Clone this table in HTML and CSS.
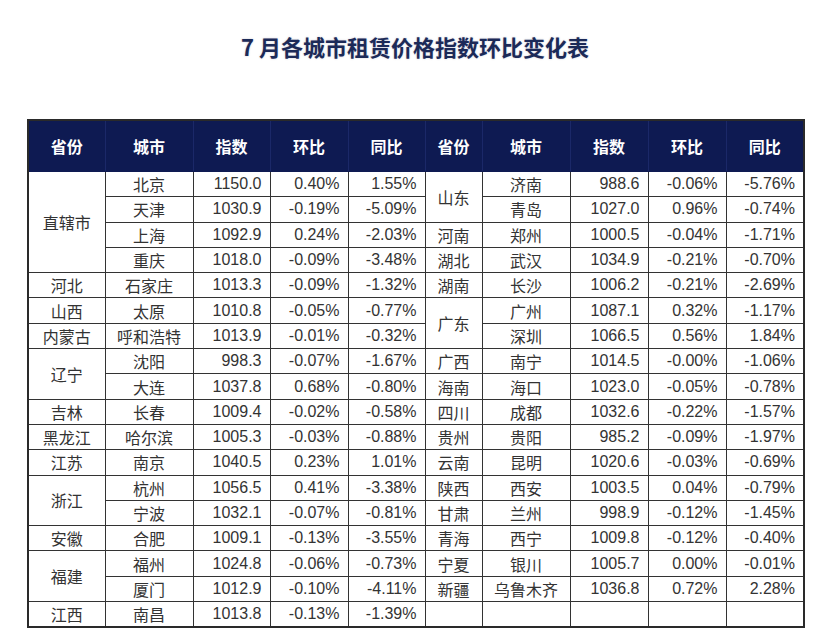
FILE: index.html
```html
<!DOCTYPE html>
<html lang="zh">
<head>
<meta charset="utf-8">
<title>7 月各城市租赁价格指数环比变化表</title>
<link rel="stylesheet" href="styles.css">
</head>
<body>
<div class="page">
  <h1 class="title">7 月各城市租赁价格指数环比变化表</h1>
  <table class="rent">
    <colgroup>
      <col class="c-prov"><col class="c-city"><col class="c-num"><col class="c-num2"><col class="c-num">
      <col class="c-prov2"><col class="c-city"><col class="c-num2"><col class="c-num2"><col class="c-num2">
    </colgroup>
    <thead>
      <tr>
        <th>省份</th><th>城市</th><th>指数</th><th>环比</th><th>同比</th>
        <th>省份</th><th>城市</th><th>指数</th><th>环比</th><th>同比</th>
      </tr>
    </thead>
    <tbody>
      <tr><td class="t" rowspan="4">直辖市</td><td class="t">北京</td><td>1150.0</td><td>0.40%</td><td>1.55%</td>
          <td class="t" rowspan="2">山东</td><td class="t">济南</td><td>988.6</td><td>-0.06%</td><td>-5.76%</td></tr>
      <tr><td class="t">天津</td><td>1030.9</td><td>-0.19%</td><td>-5.09%</td>
          <td class="t">青岛</td><td>1027.0</td><td>0.96%</td><td>-0.74%</td></tr>
      <tr><td class="t">上海</td><td>1092.9</td><td>0.24%</td><td>-2.03%</td>
          <td class="t">河南</td><td class="t">郑州</td><td>1000.5</td><td>-0.04%</td><td>-1.71%</td></tr>
      <tr><td class="t">重庆</td><td>1018.0</td><td>-0.09%</td><td>-3.48%</td>
          <td class="t">湖北</td><td class="t">武汉</td><td>1034.9</td><td>-0.21%</td><td>-0.70%</td></tr>
      <tr><td class="t">河北</td><td class="t">石家庄</td><td>1013.3</td><td>-0.09%</td><td>-1.32%</td>
          <td class="t">湖南</td><td class="t">长沙</td><td>1006.2</td><td>-0.21%</td><td>-2.69%</td></tr>
      <tr><td class="t">山西</td><td class="t">太原</td><td>1010.8</td><td>-0.05%</td><td>-0.77%</td>
          <td class="t" rowspan="2">广东</td><td class="t">广州</td><td>1087.1</td><td>0.32%</td><td>-1.17%</td></tr>
      <tr><td class="t">内蒙古</td><td class="t">呼和浩特</td><td>1013.9</td><td>-0.01%</td><td>-0.32%</td>
          <td class="t">深圳</td><td>1066.5</td><td>0.56%</td><td>1.84%</td></tr>
      <tr><td class="t" rowspan="2">辽宁</td><td class="t">沈阳</td><td>998.3</td><td>-0.07%</td><td>-1.67%</td>
          <td class="t">广西</td><td class="t">南宁</td><td>1014.5</td><td>-0.00%</td><td>-1.06%</td></tr>
      <tr><td class="t">大连</td><td>1037.8</td><td>0.68%</td><td>-0.80%</td>
          <td class="t">海南</td><td class="t">海口</td><td>1023.0</td><td>-0.05%</td><td>-0.78%</td></tr>
      <tr><td class="t">吉林</td><td class="t">长春</td><td>1009.4</td><td>-0.02%</td><td>-0.58%</td>
          <td class="t">四川</td><td class="t">成都</td><td>1032.6</td><td>-0.22%</td><td>-1.57%</td></tr>
      <tr><td class="t">黑龙江</td><td class="t">哈尔滨</td><td>1005.3</td><td>-0.03%</td><td>-0.88%</td>
          <td class="t">贵州</td><td class="t">贵阳</td><td>985.2</td><td>-0.09%</td><td>-1.97%</td></tr>
      <tr><td class="t">江苏</td><td class="t">南京</td><td>1040.5</td><td>0.23%</td><td>1.01%</td>
          <td class="t">云南</td><td class="t">昆明</td><td>1020.6</td><td>-0.03%</td><td>-0.69%</td></tr>
      <tr><td class="t" rowspan="2">浙江</td><td class="t">杭州</td><td>1056.5</td><td>0.41%</td><td>-3.38%</td>
          <td class="t">陕西</td><td class="t">西安</td><td>1003.5</td><td>0.04%</td><td>-0.79%</td></tr>
      <tr><td class="t">宁波</td><td>1032.1</td><td>-0.07%</td><td>-0.81%</td>
          <td class="t">甘肃</td><td class="t">兰州</td><td>998.9</td><td>-0.12%</td><td>-1.45%</td></tr>
      <tr><td class="t">安徽</td><td class="t">合肥</td><td>1009.1</td><td>-0.13%</td><td>-3.55%</td>
          <td class="t">青海</td><td class="t">西宁</td><td>1009.8</td><td>-0.12%</td><td>-0.40%</td></tr>
      <tr><td class="t" rowspan="2">福建</td><td class="t">福州</td><td>1024.8</td><td>-0.06%</td><td>-0.73%</td>
          <td class="t">宁夏</td><td class="t">银川</td><td>1005.7</td><td>0.00%</td><td>-0.01%</td></tr>
      <tr><td class="t">厦门</td><td>1012.9</td><td>-0.10%</td><td>-4.11%</td>
          <td class="t">新疆</td><td class="t">乌鲁木齐</td><td>1036.8</td><td>0.72%</td><td>2.28%</td></tr>
      <tr><td class="t">江西</td><td class="t">南昌</td><td>1013.8</td><td>-0.13%</td><td>-1.39%</td>
          <td></td><td></td><td></td><td></td><td></td></tr>
    </tbody>
  </table>
</div>
</body>
</html>
```
FILE: styles.css
```css
html, body {
  margin: 0;
  padding: 0;
  background: #ffffff;
}

.page {
  width: 830px;
  height: 642px;
  padding-top: 31px;
  box-sizing: border-box;
  font-family: "Liberation Sans", "Noto Sans CJK SC", sans-serif;
}

.title {
  margin: 0;
  height: 30px;
  line-height: 30px;
  text-align: center;
  font-family: "Noto Sans CJK SC", sans-serif;
  font-size: 22px;
  font-weight: 700;
  color: #1c2a58;
  letter-spacing: 0;
  text-shadow: 0 0 2px rgba(28, 42, 88, 0.25);
}

.rent {
  margin: 58px 0 0 27px;
  width: 776px;
  border-collapse: collapse;
  table-layout: fixed;
  border: 2px solid #2a2a2a;
}

.c-prov { width: 77px; }
.c-city { width: 88px; }
.c-num { width: 77px; }
.c-num2 { width: 78px; }
.c-prov2 { width: 57px; }

.rent th {
  height: 50px;
  padding: 0;
  background: #0e1a52;
  color: #ffffff;
  font-family: "Noto Sans CJK SC", sans-serif;
  font-size: 16px;
  font-weight: 700;
  text-align: center;
  border: 1px solid #0e1a52;
  border-right: 1px solid #1b2868;
}

.rent td {
  height: 24.3px;
  padding: 0 8px 0 0;
  border: 1px solid #333333;
  font-family: "Liberation Sans", sans-serif;
  font-size: 16px;
  color: #333333;
  text-align: right;
  line-height: 22px;
  white-space: nowrap;
  overflow: hidden;
}

.rent td.t {
  padding: 0;
  text-align: center;
  font-family: "Noto Sans CJK SC", sans-serif;
  font-size: 16px;
  color: #333333;
}
```
